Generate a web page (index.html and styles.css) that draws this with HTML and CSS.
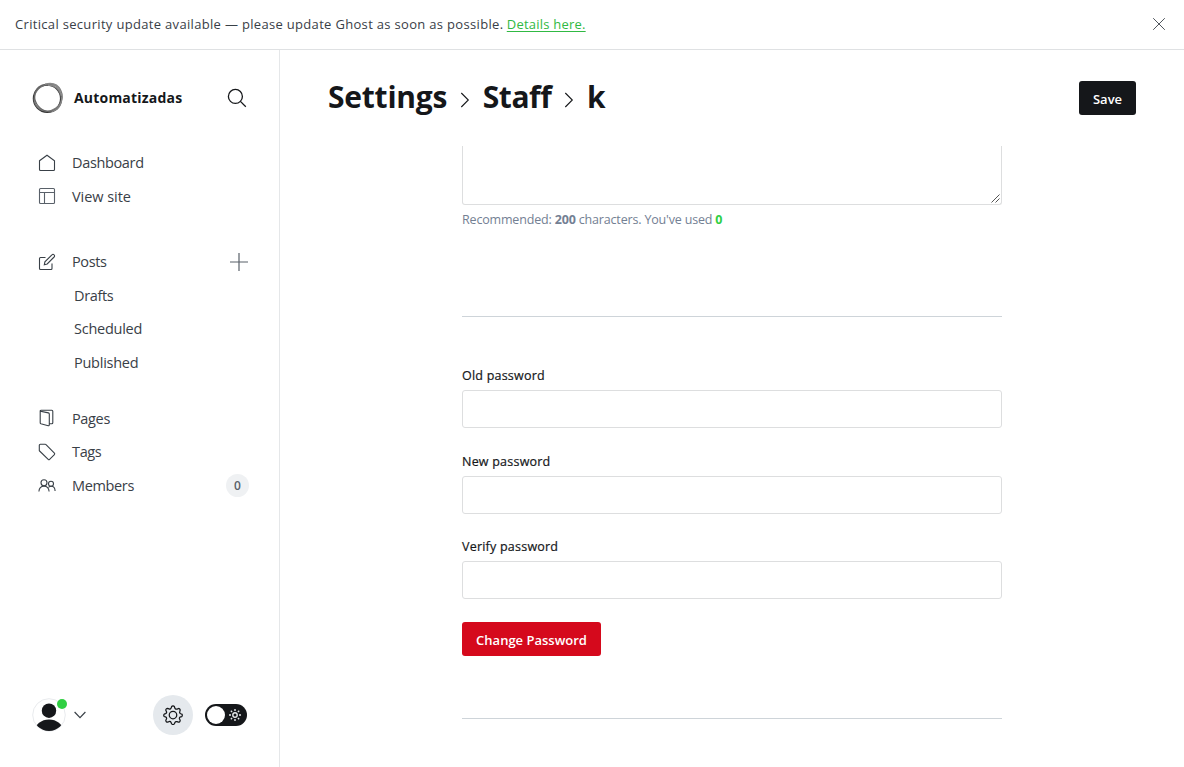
FILE: index.html
```html
<!DOCTYPE html>
<html lang="en">
<head>
<meta charset="utf-8">
<title>Settings - Staff - k</title>
<link rel="stylesheet" href="styles.css">
</head>
<body>
<div class="app">
  <header class="alert">
    <p class="alert-text"><span class="alert-copy">Critical security update available — please update Ghost as soon as possible.</span> <a class="alert-link" href="#">Details here.</a></p>
    <svg class="alert-close" viewBox="0 0 14 14"><path d="M1.2 1.2l11.6 11.6M12.8 1.2L1.2 12.8"/></svg>
  </header>
  <div class="viewport">
    <nav class="sidebar">
      <div class="brand">
        <svg class="brand-logo" viewBox="0 0 32 32">
          <circle cx="15.200" cy="16.600" r="13.600" stroke="#333" stroke-width="1.700"/>
          <ellipse cx="16.400" cy="15.800" rx="14.400" ry="13" stroke="#777" stroke-width="1.300" transform="rotate(-35 16 16)"/>
          <ellipse cx="16" cy="16" rx="14.400" ry="12.600" stroke="#666" stroke-width="1.200" transform="rotate(50 16 16)"/>
          <path d="M13 2.200C20 .4 26 2.600 28.800 8.500M16 3.200C23 3 28 7 29.500 13.500M30 15C30 22 26 27.500 20 29.600" stroke="#888" stroke-width="1.400"/>
        </svg>
        <span class="brand-name">Automatizadas</span>
        <svg class="search" viewBox="0 0 20 20"><circle cx="8.400" cy="8.400" r="7"/><path d="M13.400 13.400l5.400 5.400"/></svg>
      </div>
      <ul class="nav nav-top">
        <li class="row"><svg class="icon" viewBox="0 0 18 18"><path d="M1.500 6.800L9 1.200l7.500 5.600v8.700a1 1 0 0 1-1 1h-13a1 1 0 0 1-1-1z"/></svg><span class="label">Dashboard</span></li>
        <li class="row"><svg class="icon icon-soft" viewBox="0 0 18 18"><rect x="1.500" y="1.500" width="15" height="15" rx="1"/><path d="M1.500 5.500h15M6.500 5.500v11"/></svg><span class="label label-wide">View site</span></li>
      </ul>
      <ul class="nav nav-posts">
        <li class="row"><svg class="icon" viewBox="0 0 18 18"><path d="M7.500 4.500h-5a1 1 0 0 0-1 1v10a1 1 0 0 0 1 1h10.500a1 1 0 0 0 1-1v-5M6.300 11.800l.6-3 7-7a1.500 1.500 0 0 1 2.200 0 1.500 1.500 0 0 1 0 2.200l-6.900 7z"/></svg><span class="label">Posts</span><svg class="plus" viewBox="0 0 18 18"><path d="M9 0v18M0 9h18"/></svg></li>
        <li class="row sub"><span class="label">Drafts</span></li>
        <li class="row sub"><span class="label label-sub">Scheduled</span></li>
        <li class="row sub"><span class="label label-sub">Published</span></li>
      </ul>
      <ul class="nav nav-manage">
        <li class="row"><svg class="icon" viewBox="0 0 18 18"><path d="M2.200 2.200v11.600a1 1 0 0 0 .7 1l7.300 1.900a.9.9 0 0 0 1.100-.9V5a1.200 1.200 0 0 0-.9-1.100zM2.200 2.200a1 1 0 0 1 1-.9h10.600a1 1 0 0 1 1 1v11.400a1 1 0 0 1-1 1h-2.500"/></svg><span class="label">Pages</span></li>
        <li class="row"><svg class="icon" viewBox="0 0 18 18"><path d="M1.300 2.300a1 1 0 0 1 1-1h4.900a1 1 0 0 1 .8.300l8.400 8.600a1 1 0 0 1 0 1.400l-4.800 4.800a1 1 0 0 1-1.400 0L1.600 8a1 1 0 0 1-.3-.8z"/></svg><span class="label">Tags</span></li>
        <li class="row"><svg class="icon" viewBox="0 0 18 18"><circle cx="6" cy="6.700" r="3"/><circle cx="13" cy="7.700" r="2.500"/><path d="M.9 15.500c.2-3.400 2.200-5.300 5.100-5.300s4.900 1.900 5.100 5.300M10.500 11.300c.8-.7 1.600-1 2.600-1 2.400 0 3.900 1.700 4 4.600"/></svg><span class="label">Members</span><span class="count">0</span></li>
      </ul>
      <div class="user-bar">
        <div class="avatar">
          <svg class="avatar-pic" viewBox="0 0 34 34"><defs><clipPath id="disc"><circle cx="17" cy="17" r="16"/></clipPath></defs><circle cx="17" cy="17" r="16.300" fill="#fff" stroke="#e8eaed"/><g clip-path="url(#disc)" fill="#15171a"><circle cx="17" cy="12.700" r="7.200"/><ellipse cx="17" cy="33" rx="14" ry="11.500"/></g></svg>
          <span class="status"></span>
        </div>
        <svg class="chevron" viewBox="0 0 12 8"><path d="M.6 1L6 6.600 11.400 1"/></svg>
        <div class="gear-btn"><svg class="gear" viewBox="0 0 24 24"><circle cx="12" cy="12" r="4.500"/><path d="M13.700 2.200 14.300 3.800a2 2 0 0 0 2.700 1.100l1.500-.7a2 2 0 0 1 2.100 2.100l-.5 1.700a2 2 0 0 0 1.100 2.500l1.300.4a2 2 0 0 1 0 3l-1.500.4a2 2 0 0 0-1.100 2.600l.7 1.500a2 2 0 0 1-2.200 2.200l-1.600-.6a2 2 0 0 0-2.500 1.100l-.6 1.400a2 2 0 0 1-3.400 0l-.6-1.500a2 2 0 0 0-2.600-1l-1.500.6a2 2 0 0 1-2.200-2.200l.7-1.500a2 2 0 0 0-1.100-2.600l-1.500-.5a2 2 0 0 1 0-2.900l1.500-.5a2 2 0 0 0 1.100-2.600l-.7-1.500a2 2 0 0 1 2.200-2.200l1.500.6a2 2 0 0 0 2.600-1.100l.6-1.600a2 2 0 0 1 3.400 0z"/></svg></div>
        <div class="toggle"><span class="knob"></span><svg class="sun" viewBox="0 0 14 14"><circle cx="7" cy="7" r="2.200"/><path d="M7 1v2M7 11v2M1 7h2M11 7h2M2.800 2.800l1.300 1.300M9.900 9.900l1.300 1.300M2.800 11.200l1.300-1.300M9.900 4.100l1.300-1.300"/></svg></div>
      </div>
    </nav>
    <main class="main">
      <div class="canvas-header">
        <h1 class="title"><span class="crumb">Settings</span><svg class="sep" viewBox="0 0 10 16"><path d="M1.300 1L8.300 8l-7 7"/></svg><span class="crumb crumb-staff">Staff</span><svg class="sep" viewBox="0 0 10 16"><path d="M1.300 1L8.300 8l-7 7"/></svg><span class="crumb">k</span></h1>
        <button class="btn save">Save</button>
      </div>
      <section class="form">
        <div class="bio"><svg class="grip" viewBox="0 0 10 10"><path d="M1.500 9.500l8-8M5.500 9.500l4-4"/></svg></div>
        <p class="hint">Recommended: <b>200</b> characters. You've used <b class="used">0</b></p>
        <hr class="rule">
        <div class="field"><label for="old">Old password</label><input id="old" type="password"></div>
        <div class="field"><label for="new">New password</label><input id="new" type="password"></div>
        <div class="field"><label for="verify">Verify password</label><input id="verify" type="password"></div>
        <button class="btn change">Change Password</button>
        <hr class="rule rule-end">
      </section>
    </main>
  </div>
</div>
</body>
</html>
```
FILE: styles.css
```css
* { box-sizing: border-box; }
body {
  margin: 0;
  font-family: "Open Sans", "Noto Sans", sans-serif;
  color: #15171a;
  background: #fff;
}
svg { display: block; fill: none; flex: none; }
p, h1, ul { margin: 0; padding: 0; }
ul { list-style: none; }
.app { display: flex; flex-direction: column; height: 767px; overflow: hidden; }

.alert {
  flex: none;
  display: flex;
  align-items: center;
  justify-content: space-between;
  height: 50px;
  padding: 0 18px 2px 15px;
  border-bottom: 1px solid #dfe1e3;
}
.alert-text { font-size: 13px; color: #394047; white-space: nowrap; }
.alert-copy { letter-spacing: 0.320px; }
.alert-link { color: #30b943; letter-spacing: 0.220px; text-underline-offset: 2px; }
.alert-close { width: 14px; height: 14px; stroke: #50565d; stroke-width: 1; }

.viewport { flex: 1; display: flex; min-height: 0; }
.sidebar {
  flex: none;
  display: flex;
  flex-direction: column;
  width: 280px;
  padding: 32px;
  border-right: 1px solid #e5e7e9;
}
.brand { display: flex; align-items: center; height: 32px; }
.brand-logo { width: 32px; height: 32px; }
.brand-name { margin: -2px 0 0 10px; font-size: 14px; font-weight: 700; letter-spacing: 0.200px; }
.search { width: 20px; height: 20px; margin-left: auto; stroke: #15171a; stroke-width: 1.3; }

.nav-top { margin-top: 32px; }
.nav-posts { margin-top: 32px; }
.nav-manage { margin-top: 22.500px; }
.row { display: flex; align-items: center; height: 33.500px; padding-left: 6px; font-size: 14.500px; color: #394047; }
.label { letter-spacing: -0.350px; }
.label-sub { letter-spacing: -0.250px; }
.label-wide { letter-spacing: -0.050px; }
.icon { width: 18px; height: 18px; margin-right: 16px; stroke: #394047; stroke-width: 1.1; }
.icon-soft { stroke: #596069; }
.sub { padding-left: 42px; }
.plus { width: 18px; height: 18px; margin: 0 -1px 0 auto; stroke: #596069; stroke-width: 1.2; }
.count {
  margin: 0 -2px 0 auto;
  width: 23px;
  height: 23px;
  border-radius: 50%;
  background: #eff1f3;
  color: #596069;
  font-size: 12px;
  font-weight: 600;
  line-height: 24px;
  text-align: center;
}

.user-bar { display: flex; align-items: center; height: 40px; margin-top: auto; }
.avatar { position: relative; width: 34px; height: 34px; }
.avatar-pic { width: 34px; height: 34px; }
.status { position: absolute; top: 1px; right: -1px; width: 10px; height: 10px; border-radius: 50%; background: #30cf43; }
.chevron { width: 12px; height: 8px; margin-left: 8px; stroke: #394047; stroke-width: 1.2; }
.gear-btn { display: flex; align-items: center; justify-content: center; width: 40px; height: 40px; margin-left: auto; border-radius: 50%; background: #e5e9ed; }
.gear { width: 20px; height: 20px; stroke: #15171a; stroke-width: 1.5; }
.toggle { display: flex; align-items: center; justify-content: space-between; width: 42px; height: 22px; margin-left: 12px; padding: 0 5px 0 2px; border-radius: 11px; background: #15171a; }
.knob { width: 18px; height: 18px; border-radius: 50%; background: #fff; }
.sun { width: 14px; height: 14px; stroke: #e5e7e9; stroke-width: 1.4; }

.main { flex: 1; min-width: 0; }
.canvas-header { display: flex; align-items: center; justify-content: space-between; height: 96px; padding: 0 48px; }
.title { display: flex; align-items: center; margin-top: -2px; font-size: 30px; line-height: 40px; font-weight: 700; }
.crumb { letter-spacing: -0.220px; }
.crumb-staff { letter-spacing: -0.400px; }
.sep { width: 10px; height: 16px; margin: 5px 13px 0 12.400px; stroke: #15171a; stroke-width: 1.1; }
.btn { display: block; height: 34px; padding: 0; border: 0; border-radius: 3px; color: #fff; font: 600 13px "Open Sans", sans-serif; line-height: 36px; }
.save { width: 57px; background: #15171a; }
.form { width: 540px; margin-left: 182px; }
.bio { display: flex; align-items: flex-end; justify-content: flex-end; height: 59px; padding: 0 1px 1px 0; border: 1px solid #dddedf; border-top: 0; border-radius: 0 0 3px 3px; }
.grip { width: 10px; height: 10px; stroke: #555; stroke-width: 1; }
.hint { margin-top: 5px; font-size: 12.500px; line-height: 20px; letter-spacing: -0.170px; color: #738093; white-space: nowrap; }
.hint b { font-weight: 700; }
.hint .used { color: #30cf43; }
.rule { height: 1px; margin: 86px 0 49px; border: 0; background: #ced4d9; }
.field { display: flex; flex-direction: column; height: 85.600px; }
.field label { height: 23.700px; padding-top: 0.300px; margin-bottom: 0.300px; font-size: 12.500px; font-weight: 500; line-height: 20px; letter-spacing: 0.220px; white-space: nowrap; align-self: flex-start; -webkit-text-stroke: 0.200px #15171a; }
.field input { width: 540px; height: 38px; border: 1px solid #dddedf; border-radius: 3px; background: #fff; }
.change { width: 139px; margin-top: -1px; background: #d5091c; }
.rule-end { margin: 62px 0 0; }
```
